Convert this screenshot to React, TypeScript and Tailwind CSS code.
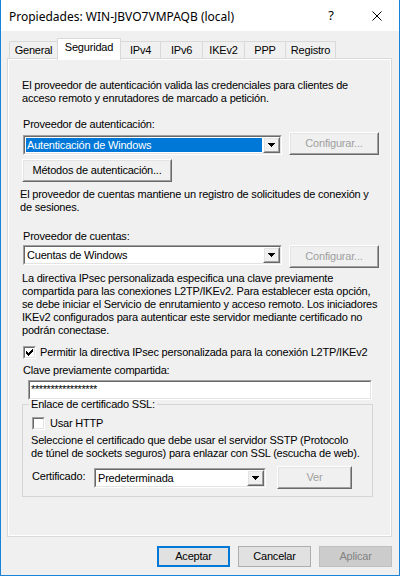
import React from 'react';

const ui = "[font-family:'Liberation_Sans',Arial,sans-serif] text-[11px] leading-[13px] tracking-[-0.2px] text-black";

const raisedOuter = 'border border-t-white border-l-white border-r-[#696969] border-b-[#696969]';
const raisedInner = 'border border-t-[#e3e3e3] border-l-[#e3e3e3] border-r-[#a0a0a0] border-b-[#a0a0a0]';
const sunkenOuter = 'border border-t-[#a0a0a0] border-l-[#a0a0a0] border-r-white border-b-white';
const sunkenInner = 'border border-t-[#696969] border-l-[#696969] border-r-[#e3e3e3] border-b-[#e3e3e3]';

const ClassicButton = ({ label, className = '', disabled = false }: { label: string; className?: string; disabled?: boolean }) => (
  <div className={`${raisedOuter} h-[23px] bg-[#f0f0f0] shrink-0 ${className}`}>
    <div className={`${raisedInner} h-full flex items-center justify-center ${disabled ? 'text-[#a0a0a0]' : 'text-black'}`}>
      {label}
    </div>
  </div>
);

const Arrow = () => (
  <div className={`${raisedOuter} w-[17px] h-full bg-[#f0f0f0] shrink-0`}>
    <div className={`${raisedInner} h-full flex items-center justify-center`}>
      <svg width="7" height="4" viewBox="0 0 7 4" shapeRendering="crispEdges">
        <polygon points="0,0 7,0 3.5,4" fill="black" />
      </svg>
    </div>
  </div>
);

const Combo = ({ value, highlighted = false, className = '' }: { value: string; highlighted?: boolean; className?: string }) => (
  <div className={`${sunkenOuter} h-[20px] shrink-0 ${className}`}>
    <div className={`${sunkenInner} h-full flex bg-white`}>
      <div className="flex-1 p-[1px] flex">
        <div className={`flex-1 flex items-center pl-[1px] ${highlighted ? 'bg-[#0078d7] text-white' : ''}`}>{value}</div>
      </div>
      <Arrow />
    </div>
  </div>
);

const Check = ({ checked = false }: { checked?: boolean }) => (
  <div className={`${sunkenOuter} w-[13px] h-[13px] shrink-0`}>
    <div className={`${sunkenInner} w-full h-full bg-white flex items-center justify-center`}>
      {checked && (
        <svg width="7" height="7" viewBox="0 0 7 7" shapeRendering="crispEdges">
          <rect x="0" y="2" width="1" height="3" />
          <rect x="1" y="3" width="1" height="3" />
          <rect x="2" y="4" width="1" height="3" />
          <rect x="3" y="3" width="1" height="3" />
          <rect x="4" y="2" width="1" height="3" />
          <rect x="5" y="1" width="1" height="3" />
          <rect x="6" y="0" width="1" height="3" />
        </svg>
      )}
    </div>
  </div>
);

const tabs: [string, number][] = [
  ['General', 49],
  ['Seguridad', 64],
  ['IPv4', 41],
  ['IPv6', 43],
  ['IKEv2', 43],
  ['PPP', 42],
  ['Registro', 51],
];

const Tab = ({ label, width, active, first }: { label: string; width: number; active: boolean; first: boolean }) => (
  <div
    style={{ width }}
    className={`border border-b-0 border-[#d9d9d9] flex justify-center pt-[2px] ${first ? '' : '-ml-[1px]'} ${
      active ? 'h-[22px] -mb-[2px] bg-white relative z-10' : 'h-[17px] bg-[#f0f0f0]'
    }`}
  >
    {label}
  </div>
);

const DialogButton = ({ label, variant }: { label: string; variant: 'default' | 'normal' | 'disabled' }) => {
  const look =
    variant === 'default'
      ? 'border-2 border-[#0078d7] bg-[#e1e1e1] text-black'
      : variant === 'normal'
      ? 'border border-[#adadad] bg-[#e1e1e1] text-black'
      : 'border border-[#bfbfbf] bg-[#cccccc] text-[#838383]';
  return <div className={`w-[73px] h-[21px] flex items-center justify-center ${look}`}>{label}</div>;
};

export default function App() {
  return (
    <div className={`${ui} w-[400px] h-[576px] bg-[#f0f0f0] border-x border-b border-[#1883d7] flex flex-col`}>
      {/* title bar */}
      <div className="h-[31px] bg-white flex items-center shrink-0">
        <div className="flex-1 pl-[8px] pt-[1px] [font-family:'Segoe_UI','Noto_Sans',sans-serif] text-[12px] tracking-normal text-black">
          Propiedades: WIN-JBVO7VMPAQB (local)
        </div>
        <div className="w-[46px] h-full flex items-center justify-center [font-family:'Segoe_UI','Noto_Sans',sans-serif] text-[13px]">?</div>
        <div className="w-[45px] h-full flex items-center justify-center">
          <svg width="10" height="10" viewBox="0 0 10 10">
            <path d="M0.5 0.5 L9.5 9.5 M9.5 0.5 L0.5 9.5" stroke="black" strokeWidth="1" />
          </svg>
        </div>
      </div>

      {/* tabs */}
      <div className="mt-[7px] ml-[8px] h-[20px] flex items-end shrink-0">
        {tabs.map(([label, width], i) => (
          <Tab key={label} label={label} width={width} active={label === 'Seguridad'} first={i === 0} />
        ))}
      </div>

      {/* tab page */}
      <div className="ml-[6px] w-[385px] h-[479px] border border-[#d9d9d9] shrink-0">
        <div className="h-full border border-white flex flex-col pl-[13px]">
          <div className="mt-[19px] whitespace-nowrap">
            <div>El proveedor de autenticación valida las credenciales para clientes de</div>
            <div>acceso remoto y enrutadores de marcado a petición.</div>
          </div>

          <div className="mt-[13px] ml-[1px]">Proveedor de autenticación:</div>
          <div className="mt-[1px] flex h-[23px]">
            <Combo value="Autenticación de Windows" highlighted className="ml-[1px] mt-[3px] w-[259px]" />
            <ClassicButton label="Configurar..." disabled className="ml-[7px] w-[90px]" />
          </div>

          <ClassicButton label="Métodos de autenticación..." className="mt-[4px] w-[150px]" />

          <div className="mt-[6px] -ml-[2px] whitespace-nowrap">
            <div>El proveedor de cuentas mantiene un registro de solicitudes de conexión y</div>
            <div>de sesiones.</div>
          </div>

          <div className="mt-[16px] ml-[1px]">Proveedor de cuentas:</div>
          <div className="mt-[2px] flex h-[23px]">
            <Combo value="Cuentas de Windows" className="ml-[1px] w-[259px]" />
            <ClassicButton label="Configurar..." disabled className="ml-[7px] w-[90px]" />
          </div>

          <div className="mt-[4px] whitespace-nowrap">
            <div>La directiva IPsec personalizada especifica una clave previamente</div>
            <div>compartida para las conexiones L2TP/IKEv2. Para establecer esta opción,</div>
            <div>se debe iniciar el Servicio de enrutamiento y acceso remoto. Los iniciadores</div>
            <div>IKEv2 configurados para autenticar este servidor mediante certificado no</div>
            <div>podrán conectase.</div>
          </div>

          <div className="mt-[9px] ml-[1px] flex items-center gap-[4px] whitespace-nowrap">
            <Check checked />
            <span>Permitir la directiva IPsec personalizada para la conexión L2TP/IKEv2</span>
          </div>

          <div className="mt-[5px] ml-[1px]">Clave previamente compartida:</div>
          <div className={`${sunkenOuter} mt-[3px] ml-[6px] w-[344px] h-[20px] shrink-0`}>
            <div className={`${sunkenInner} h-full bg-white pl-[1px] pt-[1px] tracking-[-0.4px]`}>*****************</div>
          </div>

          <fieldset className="-mt-[2px] w-[351px] border border-[#d5d5d5] p-0 m-0 min-w-0">
            <legend className="ml-[6px] px-[2px]">Enlace de certificado SSL:</legend>
            <div className="pl-[8px] pb-[7px] flex flex-col">
              <div className="mt-[6px] ml-[1px] flex items-center gap-[5px]">
                <Check />
                <span>Usar HTTP</span>
              </div>
              <div className="mt-[4px] whitespace-nowrap">
                <div>Seleccione el certificado que debe usar el servidor SSTP (Protocolo</div>
                <div>de túnel de sockets seguros) para enlazar con SSL (escucha de web).</div>
              </div>
              <div className="mt-[6px] flex h-[23px]">
                <div className="w-[63px] ml-[1px] mt-[4px]">Certificado:</div>
                <Combo value="Predeterminada" className="-ml-[1px] mt-[2px] w-[172px]" />
                <ClassicButton label="Ver" disabled className="ml-[11px] w-[75px]" />
              </div>
            </div>
          </fieldset>
        </div>
      </div>

      {/* dialog buttons */}
      <div className="mt-[9px] pr-[7px] flex justify-end gap-[8px]">
        <DialogButton label="Aceptar" variant="default" />
        <DialogButton label="Cancelar" variant="normal" />
        <DialogButton label="Aplicar" variant="disabled" />
      </div>
    </div>
  );
}
